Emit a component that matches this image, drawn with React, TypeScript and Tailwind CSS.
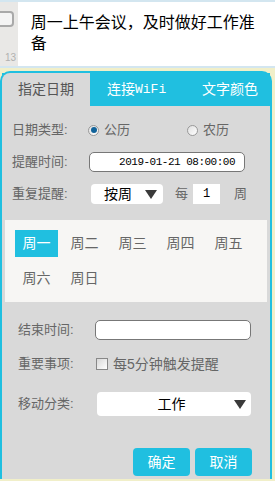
import { useState } from "react";

const days = ["周一", "周二", "周三", "周四", "周五", "周六", "周日"];
const mono = { fontFamily: '"Liberation Mono", "Noto Sans CJK SC", monospace' };

export default function App() {
  const [day, setDay] = useState(0);
  const [lunar, setLunar] = useState(false);

  return (
    <main
      className="h-[481px] w-[275px] overflow-hidden bg-[#f1efc9]"
      style={{ fontFamily: '"Liberation Sans", "Noto Sans CJK SC", sans-serif' }}
    >
      {/* note preview */}
      <div className="flex h-[68px] border-y-2 border-[#d3e6f0] bg-white">
        <div className="relative w-[18px] bg-[#e9e8e6]">
          <div className="absolute left-[-6px] top-[9px] h-[16px] w-[20px] rounded-[4px] border-2 border-[#a9a9a9] bg-[#f4f4f4]" />
          <span className="absolute bottom-[1px] left-[5px] text-[10px] text-[#b0b0b0]">13</span>
        </div>
        <p className="pl-[13px] pr-2 pt-[10px] text-[16px] leading-[21px] text-black">
          周一上午会议，及时做好工作准备
        </p>
      </div>

      {/* panel */}
      <div className="mt-[3px] mr-[3px] flex h-[408px] flex-col rounded-t-[10px] border-x-2 border-t-2 border-[#20bfe0] bg-[#d9d9d9]">
        <div className="flex h-[33px] bg-[#20bfe0] text-[14px]">
          <div className="flex w-[88px] items-center justify-center rounded-tl-[8px] bg-[#d9d9d9] text-[#555]">
            指定日期
          </div>
          <div className="flex flex-1 items-center pl-[17px] text-white">
            连接<span style={mono} className="text-[13px]">WiFi</span>
          </div>
          <div className="flex items-center pr-[12px] text-white">文字颜色</div>
        </div>

        <div className="flex flex-col text-[13px] text-[#666]">
          <div className="mt-[14px] flex h-[20px] items-center pl-[10px]">
            <span className="w-[76px]">日期类型:</span>
            <button onClick={() => setLunar(false)} className="flex items-center gap-[5px]">
              <Radio on={!lunar} />
              <span>公历</span>
            </button>
            <button onClick={() => setLunar(true)} className="ml-[57px] flex items-center gap-[5px]">
              <Radio on={lunar} />
              <span>农历</span>
            </button>
          </div>

          <div className="mt-[12px] flex h-[20px] items-center pl-[10px]">
            <span className="w-[77px]">提醒时间:</span>
            <div
              style={mono}
              className="flex h-[20px] w-[156px] items-center justify-end rounded-[5px] border border-[#777] bg-white pr-[9px] text-[11px] tracking-[-0.5px] text-black"
            >
              2019-01-21 08:00:00
            </div>
          </div>

          <div className="mt-[12px] flex h-[20px] items-center pl-[10px]">
            <span className="w-[79px]">重复提醒:</span>
            <div className="flex h-[20px] w-[72px] items-center rounded-[4px] bg-white pl-[13px] text-[14px] text-black">
              <span className="flex-1">按周</span>
              <Caret className="mr-[6px]" />
            </div>
            <span className="ml-[12px]">每</span>
            <div style={mono} className="ml-[5px] flex h-[20px] w-[27px] items-center justify-center bg-white text-[12px] text-black">
              1
            </div>
            <span className="ml-[14px]">周</span>
          </div>

          <div className="mx-[3px] mt-[16px] flex flex-wrap gap-y-[8px] bg-[#f7f6f4] px-[10px] pb-[10px] pt-[10px] text-[14px]">
            {days.map((d, i) => (
              <button
                key={d}
                onClick={() => setDay(i)}
                className={
                  "h-[27px] w-[43px] " +
                  (i === day ? "bg-[#20bfe0] text-white" : "text-[#666]") +
                  (i % 5 === 4 ? "" : " mr-[5px]")
                }
              >
                {d}
              </button>
            ))}
          </div>

          <div className="mt-[18px] flex h-[20px] items-center pl-[16px]">
            <span className="w-[77px]">结束时间:</span>
            <div className="h-[20px] w-[156px] rounded-[5px] border border-[#777] bg-white" />
          </div>

          <div className="mt-[14px] flex h-[20px] items-center pl-[16px]">
            <span className="w-[78px]">重要事项:</span>
            <span className="h-[12px] w-[12px] border border-[#888] bg-gradient-to-br from-[#d8d8d8] to-white" />
            <span className="ml-[5px] text-[14px]">每5分钟触发提醒</span>
          </div>

          <div className="mt-[18px] flex h-[24px] items-center pl-[16px]">
            <span className="w-[79px]">移动分类:</span>
            <div className="flex h-[24px] w-[154px] items-center rounded-[4px] bg-white text-[14px] text-black">
              <span className="flex-1 pl-[12px] text-center">工作</span>
              <Caret className="mr-[5px]" />
            </div>
          </div>

          <div className="mt-[32px] flex justify-end gap-[5px] pr-[18px] text-[14px]">
            <button className="h-[28px] w-[57px] rounded-[4px] bg-[#20bfe0] text-white">确定</button>
            <button className="h-[28px] w-[57px] rounded-[4px] bg-[#20bfe0] text-white">取消</button>
          </div>
        </div>
      </div>
    </main>
  );
}

function Caret({ className }: { className: string }) {
  return (
    <svg width="12" height="9" viewBox="0 0 12 9" className={className}>
      <path d="M0 0H12L6 9Z" fill="#3a3a3a" />
    </svg>
  );
}

function Radio({ on }: { on: boolean }) {
  return (
    <span className="flex h-[11px] w-[11px] items-center justify-center rounded-full border border-[#999] bg-gradient-to-br from-[#e0e0e0] to-white">
      {on && <span className="h-[6px] w-[6px] rounded-full bg-[#11639a]" />}
    </span>
  );
}
